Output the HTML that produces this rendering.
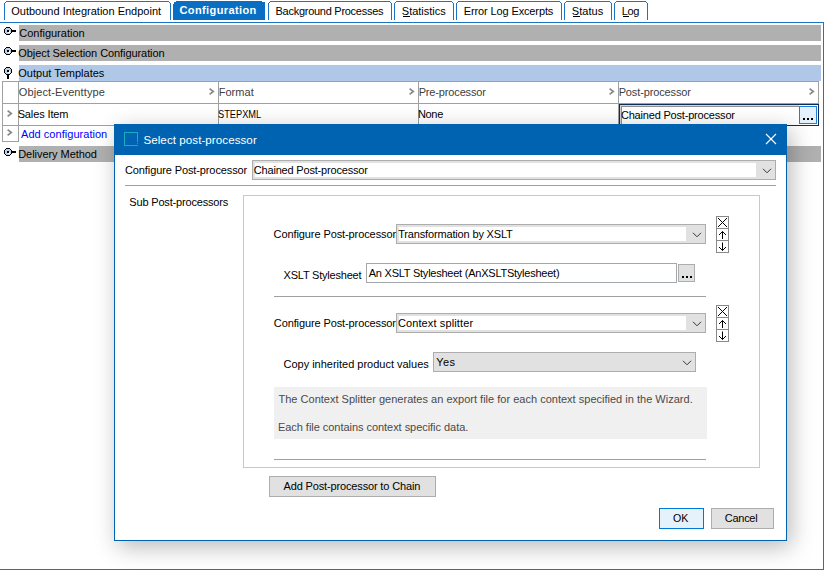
<!DOCTYPE html><html><head><meta charset="utf-8"><style>
html,body{margin:0;padding:0;width:824px;height:570px;overflow:hidden;background:#fff;position:relative;font-family:'Liberation Sans', sans-serif;}
.t{position:absolute;white-space:pre;line-height:20px;font-family:'Liberation Sans', sans-serif;}
.tab{position:absolute;top:1px;height:19px;box-sizing:border-box;border:1px solid #1c74c4;border-bottom:none;border-radius:3px 3px 0 0;background:#fff;}
</style></head><body>
<div style="position:absolute;left:6px;top:1px;width:163px;height:1px;background:#1c74c4"></div>
<div style="position:absolute;left:5px;top:2px;width:1px;height:1px;background:#1c74c4"></div>
<div style="position:absolute;left:169px;top:2px;width:1px;height:1px;background:#1c74c4"></div>
<div style="position:absolute;left:4px;top:3px;width:1px;height:17px;background:#1c74c4"></div>
<div style="position:absolute;left:170px;top:3px;width:1px;height:17px;background:#1c74c4"></div>
<div style="position:absolute;left:173px;top:4px;width:92px;height:16px;background:#0a6fc2"></div>
<div style="position:absolute;left:174px;top:2px;width:91px;height:2px;background:#0a6fc2"></div>
<div style="position:absolute;left:176px;top:1px;width:86px;height:1px;background:#0a6fc2"></div>
<div style="position:absolute;left:270px;top:1px;width:120px;height:1px;background:#1c74c4"></div>
<div style="position:absolute;left:269px;top:2px;width:1px;height:1px;background:#1c74c4"></div>
<div style="position:absolute;left:390px;top:2px;width:1px;height:1px;background:#1c74c4"></div>
<div style="position:absolute;left:268px;top:3px;width:1px;height:17px;background:#1c74c4"></div>
<div style="position:absolute;left:391px;top:3px;width:1px;height:17px;background:#1c74c4"></div>
<div style="position:absolute;left:396px;top:1px;width:56px;height:1px;background:#1c74c4"></div>
<div style="position:absolute;left:395px;top:2px;width:1px;height:1px;background:#1c74c4"></div>
<div style="position:absolute;left:452px;top:2px;width:1px;height:1px;background:#1c74c4"></div>
<div style="position:absolute;left:394px;top:3px;width:1px;height:17px;background:#1c74c4"></div>
<div style="position:absolute;left:453px;top:3px;width:1px;height:17px;background:#1c74c4"></div>
<div style="position:absolute;left:458px;top:1px;width:102px;height:1px;background:#1c74c4"></div>
<div style="position:absolute;left:457px;top:2px;width:1px;height:1px;background:#1c74c4"></div>
<div style="position:absolute;left:560px;top:2px;width:1px;height:1px;background:#1c74c4"></div>
<div style="position:absolute;left:456px;top:3px;width:1px;height:17px;background:#1c74c4"></div>
<div style="position:absolute;left:561px;top:3px;width:1px;height:17px;background:#1c74c4"></div>
<div style="position:absolute;left:566px;top:1px;width:44px;height:1px;background:#1c74c4"></div>
<div style="position:absolute;left:565px;top:2px;width:1px;height:1px;background:#1c74c4"></div>
<div style="position:absolute;left:610px;top:2px;width:1px;height:1px;background:#1c74c4"></div>
<div style="position:absolute;left:564px;top:3px;width:1px;height:17px;background:#1c74c4"></div>
<div style="position:absolute;left:611px;top:3px;width:1px;height:17px;background:#1c74c4"></div>
<div style="position:absolute;left:616px;top:1px;width:30px;height:1px;background:#1c74c4"></div>
<div style="position:absolute;left:615px;top:2px;width:1px;height:1px;background:#1c74c4"></div>
<div style="position:absolute;left:646px;top:2px;width:1px;height:1px;background:#1c74c4"></div>
<div style="position:absolute;left:614px;top:3px;width:1px;height:17px;background:#1c74c4"></div>
<div style="position:absolute;left:647px;top:3px;width:1px;height:17px;background:#1c74c4"></div>
<div style="position:absolute;left:0px;top:22px;width:824px;height:1px;background:#1c74c4"></div>
<div style="position:absolute;left:823px;top:22px;width:1px;height:548px;background:#1c74c4"></div>
<div style="position:absolute;left:0px;top:569px;width:824px;height:1px;background:#1c74c4"></div>
<div style="position:absolute;left:19px;top:25px;width:802px;height:16px;background:#b0b0b0"></div>
<div style="position:absolute;left:19px;top:45px;width:802px;height:16px;background:#b0b0b0"></div>
<div style="position:absolute;left:19px;top:65px;width:802px;height:16px;background:#afc8e8"></div>
<div style="position:absolute;left:19px;top:146px;width:802px;height:16px;background:#b0b0b0"></div>
<svg style="position:absolute;left:4px;top:27px" width="16" height="13" shape-rendering="crispEdges"><rect x="1" y="1" width="6" height="6" fill="#bdd2e6"/><rect x="2" y="0" width="4" height="1" fill="#000"/><rect x="2" y="7" width="4" height="1" fill="#000"/><rect x="0" y="2" width="1" height="4" fill="#000"/><rect x="7" y="2" width="1" height="4" fill="#000"/><rect x="1" y="1" width="1" height="1" fill="#000"/><rect x="6" y="1" width="1" height="1" fill="#000"/><rect x="1" y="6" width="1" height="1" fill="#000"/><rect x="6" y="6" width="1" height="1" fill="#000"/><rect x="3" y="3" width="2" height="2" fill="#000"/><rect x="4" y="5" width="2" height="1" fill="#fff"/><rect x="5" y="4" width="1" height="2" fill="#fff"/><rect x="8" y="3" width="4" height="2" fill="#000"/></svg>
<svg style="position:absolute;left:4px;top:47px" width="16" height="13" shape-rendering="crispEdges"><rect x="1" y="1" width="6" height="6" fill="#bdd2e6"/><rect x="2" y="0" width="4" height="1" fill="#000"/><rect x="2" y="7" width="4" height="1" fill="#000"/><rect x="0" y="2" width="1" height="4" fill="#000"/><rect x="7" y="2" width="1" height="4" fill="#000"/><rect x="1" y="1" width="1" height="1" fill="#000"/><rect x="6" y="1" width="1" height="1" fill="#000"/><rect x="1" y="6" width="1" height="1" fill="#000"/><rect x="6" y="6" width="1" height="1" fill="#000"/><rect x="3" y="3" width="2" height="2" fill="#000"/><rect x="4" y="5" width="2" height="1" fill="#fff"/><rect x="5" y="4" width="1" height="2" fill="#fff"/><rect x="8" y="3" width="4" height="2" fill="#000"/></svg>
<svg style="position:absolute;left:4px;top:67px" width="16" height="13" shape-rendering="crispEdges"><rect x="1" y="1" width="6" height="6" fill="#bdd2e6"/><rect x="2" y="0" width="4" height="1" fill="#000"/><rect x="2" y="7" width="4" height="1" fill="#000"/><rect x="0" y="2" width="1" height="4" fill="#000"/><rect x="7" y="2" width="1" height="4" fill="#000"/><rect x="1" y="1" width="1" height="1" fill="#000"/><rect x="6" y="1" width="1" height="1" fill="#000"/><rect x="1" y="6" width="1" height="1" fill="#000"/><rect x="6" y="6" width="1" height="1" fill="#000"/><rect x="3" y="3" width="2" height="2" fill="#000"/><rect x="4" y="5" width="2" height="1" fill="#fff"/><rect x="5" y="4" width="1" height="2" fill="#fff"/><rect x="3" y="8" width="2" height="4" fill="#000"/></svg>
<svg style="position:absolute;left:4px;top:148px" width="16" height="13" shape-rendering="crispEdges"><rect x="1" y="1" width="6" height="6" fill="#bdd2e6"/><rect x="2" y="0" width="4" height="1" fill="#000"/><rect x="2" y="7" width="4" height="1" fill="#000"/><rect x="0" y="2" width="1" height="4" fill="#000"/><rect x="7" y="2" width="1" height="4" fill="#000"/><rect x="1" y="1" width="1" height="1" fill="#000"/><rect x="6" y="1" width="1" height="1" fill="#000"/><rect x="1" y="6" width="1" height="1" fill="#000"/><rect x="6" y="6" width="1" height="1" fill="#000"/><rect x="3" y="3" width="2" height="2" fill="#000"/><rect x="4" y="5" width="2" height="1" fill="#fff"/><rect x="5" y="4" width="1" height="2" fill="#fff"/><rect x="8" y="3" width="4" height="2" fill="#000"/></svg>
<div style="position:absolute;left:2px;top:81px;width:817px;height:1px;background:#a0a0a0"></div>
<div style="position:absolute;left:2px;top:103px;width:817px;height:1px;background:#a0a0a0"></div>
<div style="position:absolute;left:2px;top:125px;width:617px;height:1px;background:#a0a0a0"></div>
<div style="position:absolute;left:2px;top:81px;width:1px;height:61px;background:#a0a0a0"></div>
<div style="position:absolute;left:18px;top:81px;width:1px;height:61px;background:#a0a0a0"></div>
<div style="position:absolute;left:2px;top:141px;width:17px;height:1px;background:#a0a0a0"></div>
<div style="position:absolute;left:218px;top:81px;width:1px;height:45px;background:#a0a0a0"></div>
<div style="position:absolute;left:418px;top:81px;width:1px;height:45px;background:#a0a0a0"></div>
<div style="position:absolute;left:618px;top:81px;width:1px;height:45px;background:#a0a0a0"></div>
<div style="position:absolute;left:818px;top:81px;width:1px;height:23px;background:#a0a0a0"></div>
<svg style="position:absolute;left:208px;top:87px" width="8" height="10"><path d="M1.6 1.6 L5.3 4.5 L1.6 7.4" fill="none" stroke="#888" stroke-width="1.7"/></svg>
<svg style="position:absolute;left:408px;top:87px" width="8" height="10"><path d="M1.6 1.6 L5.3 4.5 L1.6 7.4" fill="none" stroke="#888" stroke-width="1.7"/></svg>
<svg style="position:absolute;left:608px;top:87px" width="8" height="10"><path d="M1.6 1.6 L5.3 4.5 L1.6 7.4" fill="none" stroke="#888" stroke-width="1.7"/></svg>
<svg style="position:absolute;left:808px;top:87px" width="8" height="10"><path d="M1.6 1.6 L5.3 4.5 L1.6 7.4" fill="none" stroke="#888" stroke-width="1.7"/></svg>
<svg style="position:absolute;left:6px;top:109px" width="8" height="10"><path d="M1.6 1.6 L5.3 4.5 L1.6 7.4" fill="none" stroke="#888" stroke-width="1.7"/></svg>
<svg style="position:absolute;left:6px;top:128px" width="8" height="10"><path d="M1.6 1.6 L5.3 4.5 L1.6 7.4" fill="none" stroke="#888" stroke-width="1.7"/></svg>
<div style="position:absolute;left:619px;top:104px;width:200px;height:22px;box-sizing:border-box;border:1px solid #102a5a;background:#fff"></div>
<div style="position:absolute;left:620px;top:105px;width:179px;height:1px;background:#d4d4d4"></div>
<div style="position:absolute;left:620px;top:105px;width:1px;height:20px;background:#d4d4d4"></div>
<div style="position:absolute;left:621px;top:106px;width:178px;height:1px;background:#909090"></div>
<div style="position:absolute;left:621px;top:106px;width:1px;height:19px;background:#909090"></div>
<div style="position:absolute;left:799px;top:106px;width:18px;height:18px;box-sizing:border-box;border:1px solid #1f7fdc;background:#e5f1fb"></div>
<div style="position:absolute;left:803px;top:118px;width:2px;height:2px;background:#000"></div>
<div style="position:absolute;left:807px;top:118px;width:2px;height:2px;background:#000"></div>
<div style="position:absolute;left:811px;top:118px;width:2px;height:2px;background:#000"></div>
<div style="position:absolute;left:114px;top:124px;width:673px;height:417px;box-shadow:4px 6px 22px rgba(0,0,0,0.28);background:#fff;"></div>
<div style="position:absolute;left:114px;top:124px;width:673px;height:417px;box-sizing:border-box;border:1px solid #0063b1;background:#fff"></div>
<div style="position:absolute;left:114px;top:124px;width:673px;height:31px;background:#0063b1"></div>
<div style="position:absolute;left:124px;top:132px;width:14px;height:1px;background:#12aec4"></div>
<div style="position:absolute;left:124px;top:145px;width:14px;height:1px;background:#12aec4"></div>
<div style="position:absolute;left:124px;top:132px;width:1px;height:14px;background:#12aec4"></div>
<div style="position:absolute;left:137px;top:132px;width:1px;height:10px;background:#12aec4"></div>
<div style="position:absolute;left:137px;top:143px;width:1px;height:1px;background:#12aec4"></div>
<svg style="position:absolute;left:764px;top:132px" width="14" height="14"><path d="M2 2 L12 12 M12 2 L2 12" stroke="#fff" stroke-width="1.1"/></svg>
<div style="position:absolute;left:252px;top:160px;width:524px;height:20px;box-sizing:border-box;border:1px solid #adadad;background:#e1e1e1"></div>
<div style="position:absolute;left:255px;top:163px;width:501px;height:14px;background:#fff"></div>
<svg style="position:absolute;left:762px;top:168px" width="11" height="7"><path d="M1 0.8 L5 4.8 L9 0.8" fill="none" stroke="#333" stroke-width="1"/></svg>
<div style="position:absolute;left:125px;top:185px;width:651px;height:1px;background:#a0a0a0"></div>
<div style="position:absolute;left:243px;top:195px;width:517px;height:273px;box-sizing:border-box;border:1px solid #c9c9c9"></div>
<div style="position:absolute;left:396px;top:224px;width:310px;height:20px;box-sizing:border-box;border:1px solid #adadad;background:#e1e1e1"></div>
<div style="position:absolute;left:399px;top:227px;width:287px;height:14px;background:#fff"></div>
<svg style="position:absolute;left:692px;top:232px" width="11" height="7"><path d="M1 0.8 L5 4.8 L9 0.8" fill="none" stroke="#333" stroke-width="1"/></svg>
<div style="position:absolute;left:716px;top:216px;width:13px;height:37px;box-sizing:border-box;border:1px solid #888;background:#fff"></div>
<div style="position:absolute;left:716px;top:228px;width:13px;height:1px;background:#888"></div>
<div style="position:absolute;left:716px;top:240px;width:13px;height:1px;background:#888"></div>
<svg style="position:absolute;left:716px;top:216px" width="13" height="37"><path d="M2 2 L11 11 M11 2 L2 11" stroke="#000" stroke-width="1"/><path d="M6.5 15.5 L6.5 23 M3 19 L6.5 15.5 L10 19" fill="none" stroke="#000" stroke-width="1"/><path d="M6.5 26.5 L6.5 34.5 M3 31 L6.5 34.5 L10 31" fill="none" stroke="#000" stroke-width="1"/></svg>
<div style="position:absolute;left:366px;top:263px;width:311px;height:20px;box-sizing:border-box;border:1px solid #a3a7ae;background:#fff"></div>
<div style="position:absolute;left:678px;top:264px;width:17px;height:18px;box-sizing:border-box;border:1px solid #adadad;background:#e1e1e1"></div>
<div style="position:absolute;left:682px;top:276px;width:2px;height:2px;background:#000"></div>
<div style="position:absolute;left:686px;top:276px;width:2px;height:2px;background:#000"></div>
<div style="position:absolute;left:690px;top:276px;width:2px;height:2px;background:#000"></div>
<div style="position:absolute;left:274px;top:296px;width:432px;height:1px;background:#a0a0a0"></div>
<div style="position:absolute;left:396px;top:313px;width:310px;height:20px;box-sizing:border-box;border:1px solid #adadad;background:#e1e1e1"></div>
<div style="position:absolute;left:399px;top:316px;width:287px;height:14px;background:#fff"></div>
<svg style="position:absolute;left:692px;top:321px" width="11" height="7"><path d="M1 0.8 L5 4.8 L9 0.8" fill="none" stroke="#333" stroke-width="1"/></svg>
<div style="position:absolute;left:716px;top:305px;width:13px;height:37px;box-sizing:border-box;border:1px solid #888;background:#fff"></div>
<div style="position:absolute;left:716px;top:317px;width:13px;height:1px;background:#888"></div>
<div style="position:absolute;left:716px;top:329px;width:13px;height:1px;background:#888"></div>
<svg style="position:absolute;left:716px;top:305px" width="13" height="37"><path d="M2 2 L11 11 M11 2 L2 11" stroke="#000" stroke-width="1"/><path d="M6.5 15.5 L6.5 23 M3 19 L6.5 15.5 L10 19" fill="none" stroke="#000" stroke-width="1"/><path d="M6.5 26.5 L6.5 34.5 M3 31 L6.5 34.5 L10 31" fill="none" stroke="#000" stroke-width="1"/></svg>
<div style="position:absolute;left:433px;top:352px;width:263px;height:20px;box-sizing:border-box;border:1px solid #adadad;background:#e1e1e1"></div>
<svg style="position:absolute;left:682px;top:360px" width="11" height="7"><path d="M1 0.8 L5 4.8 L9 0.8" fill="none" stroke="#333" stroke-width="1"/></svg>
<div style="position:absolute;left:274px;top:387px;width:433px;height:52px;background:#f0f0f0"></div>
<div style="position:absolute;left:274px;top:459px;width:432px;height:1px;background:#a0a0a0"></div>
<div style="position:absolute;left:269px;top:476px;width:167px;height:21px;box-sizing:border-box;border:1px solid #adadad;background:#e1e1e1"></div>
<div style="position:absolute;left:659px;top:508px;width:45px;height:21px;box-sizing:border-box;border:1px solid #0078d7;background:#e5f1fb"></div>
<div style="position:absolute;left:711px;top:508px;width:63px;height:21px;box-sizing:border-box;border:1px solid #adadad;background:#e1e1e1"></div>
<div class="t" style="left:11.29px;top:1px;font-size:11px;font-weight:normal;letter-spacing:-0.002px;color:#000;">Outbound Integration Endpoint</div>
<div class="t" style="left:179.49px;top:0px;font-size:11px;font-weight:bold;letter-spacing:0.388px;color:#fff;">Configuration</div>
<div class="t" style="left:275.55px;top:1px;font-size:11px;font-weight:normal;letter-spacing:-0.272px;color:#000;">Background Processes</div>
<div class="t" style="left:401.85px;top:1px;font-size:11px;font-weight:normal;letter-spacing:-0.019px;color:#000;">Statistics</div>
<div class="t" style="left:463.85px;top:1px;font-size:11px;font-weight:normal;letter-spacing:-0.132px;color:#000;">Error Log Excerpts</div>
<div class="t" style="left:571.75px;top:1px;font-size:11px;font-weight:normal;letter-spacing:0.054px;color:#000;">Status</div>
<div class="t" style="left:621.83px;top:1px;font-size:11px;font-weight:normal;letter-spacing:-0.379px;color:#000;">Log</div>
<div class="t" style="left:19.2px;top:23px;font-size:11px;font-weight:normal;letter-spacing:0.003px;color:#000;">Configuration</div>
<div class="t" style="left:18.29px;top:43px;font-size:11px;font-weight:normal;letter-spacing:-0.077px;color:#000;">Object Selection Configuration</div>
<div class="t" style="left:18.29px;top:63px;font-size:11px;font-weight:normal;letter-spacing:0.001px;color:#000;">Output Templates</div>
<div class="t" style="left:18.23px;top:144px;font-size:11px;font-weight:normal;letter-spacing:-0.054px;color:#000;">Delivery Method</div>
<div class="t" style="left:18.79px;top:82px;font-size:11px;font-weight:normal;letter-spacing:0.117px;color:#404040;">Object-Eventtype</div>
<div class="t" style="left:218.65px;top:82px;font-size:11px;font-weight:normal;letter-spacing:0.05px;color:#404040;">Format</div>
<div class="t" style="left:418.65px;top:82px;font-size:11px;font-weight:normal;letter-spacing:-0.148px;color:#404040;">Pre-processor</div>
<div class="t" style="left:618.65px;top:82px;font-size:11px;font-weight:normal;letter-spacing:-0.124px;color:#404040;">Post-processor</div>
<div class="t" style="left:17.65px;top:104px;font-size:11px;font-weight:normal;letter-spacing:-0.127px;color:#000;">Sales Item</div>
<div class="t" style="left:217.73px;top:104px;font-size:11px;font-weight:normal;color:#000;transform:scaleX(0.8416);transform-origin:0 0;">STEPXML</div>
<div class="t" style="left:417.94px;top:104px;font-size:11px;font-weight:normal;letter-spacing:-0.317px;color:#000;">None</div>
<div class="t" style="left:620.9px;top:105px;font-size:11px;font-weight:normal;letter-spacing:-0.185px;color:#000;">Chained Post-processor</div>
<div class="t" style="left:21.07px;top:124px;font-size:11px;font-weight:normal;letter-spacing:0.035px;color:#0000ff;">Add configuration</div>
<div class="t" style="left:143.44px;top:130px;font-size:11.6px;font-weight:normal;letter-spacing:0.059px;color:#fff;">Select post-processor</div>
<div class="t" style="left:125.0px;top:160px;font-size:11px;font-weight:normal;letter-spacing:-0.108px;color:#000;">Configure Post-processor</div>
<div class="t" style="left:253.8px;top:160px;font-size:11px;font-weight:normal;letter-spacing:-0.185px;color:#000;">Chained Post-processor</div>
<div class="t" style="left:129.35000000000002px;top:192px;font-size:11px;font-weight:normal;letter-spacing:-0.176px;color:#000;">Sub Post-processors</div>
<div class="t" style="left:273.6px;top:224px;font-size:11px;font-weight:normal;letter-spacing:-0.095px;color:#000;">Configure Post-processor</div>
<div class="t" style="left:398.21px;top:224px;font-size:11px;font-weight:normal;letter-spacing:-0.16px;color:#000;">Transformation by XSLT</div>
<div class="t" style="left:283.56px;top:265px;font-size:11px;font-weight:normal;letter-spacing:-0.207px;color:#000;">XSLT Stylesheet</div>
<div class="t" style="left:368.77px;top:263px;font-size:11px;font-weight:normal;letter-spacing:-0.236px;color:#000;">An XSLT Stylesheet (AnXSLTStylesheet)</div>
<div class="t" style="left:273.8px;top:313px;font-size:11px;font-weight:normal;letter-spacing:-0.108px;color:#000;">Configure Post-processor</div>
<div class="t" style="left:397.9px;top:313px;font-size:11px;font-weight:normal;letter-spacing:0.119px;color:#000;">Context splitter</div>
<div class="t" style="left:283.5px;top:354px;font-size:11px;font-weight:normal;letter-spacing:-0.01px;color:#000;">Copy inherited product values</div>
<div class="t" style="left:436.23px;top:352px;font-size:11px;font-weight:normal;letter-spacing:0.449px;color:#000;">Yes</div>
<div class="t" style="left:278.51px;top:389px;font-size:11px;font-weight:normal;letter-spacing:0.01px;color:#4a4a4a;">The Context Splitter generates an export file for each context specified in the Wizard.</div>
<div class="t" style="left:277.95px;top:417px;font-size:11px;font-weight:normal;letter-spacing:-0.041px;color:#4a4a4a;">Each file contains context specific data.</div>
<div class="t" style="left:283.57px;top:476px;font-size:11px;font-weight:normal;letter-spacing:-0.15px;color:#000;">Add Post-processor to Chain</div>
<div class="t" style="left:672.77px;top:508px;font-size:11px;font-weight:normal;color:#000;transform:scaleX(0.9644);transform-origin:0 0;">OK</div>
<div class="t" style="left:724.8px;top:508px;font-size:11px;font-weight:normal;letter-spacing:-0.283px;color:#000;">Cancel</div>
<div style="position:absolute;left:403px;top:16px;width:7px;height:1px;background:#000"></div>
<div style="position:absolute;left:573px;top:16px;width:7px;height:1px;background:#000"></div>
<div style="position:absolute;left:623px;top:16px;width:6px;height:1px;background:#000"></div>
</body></html>
